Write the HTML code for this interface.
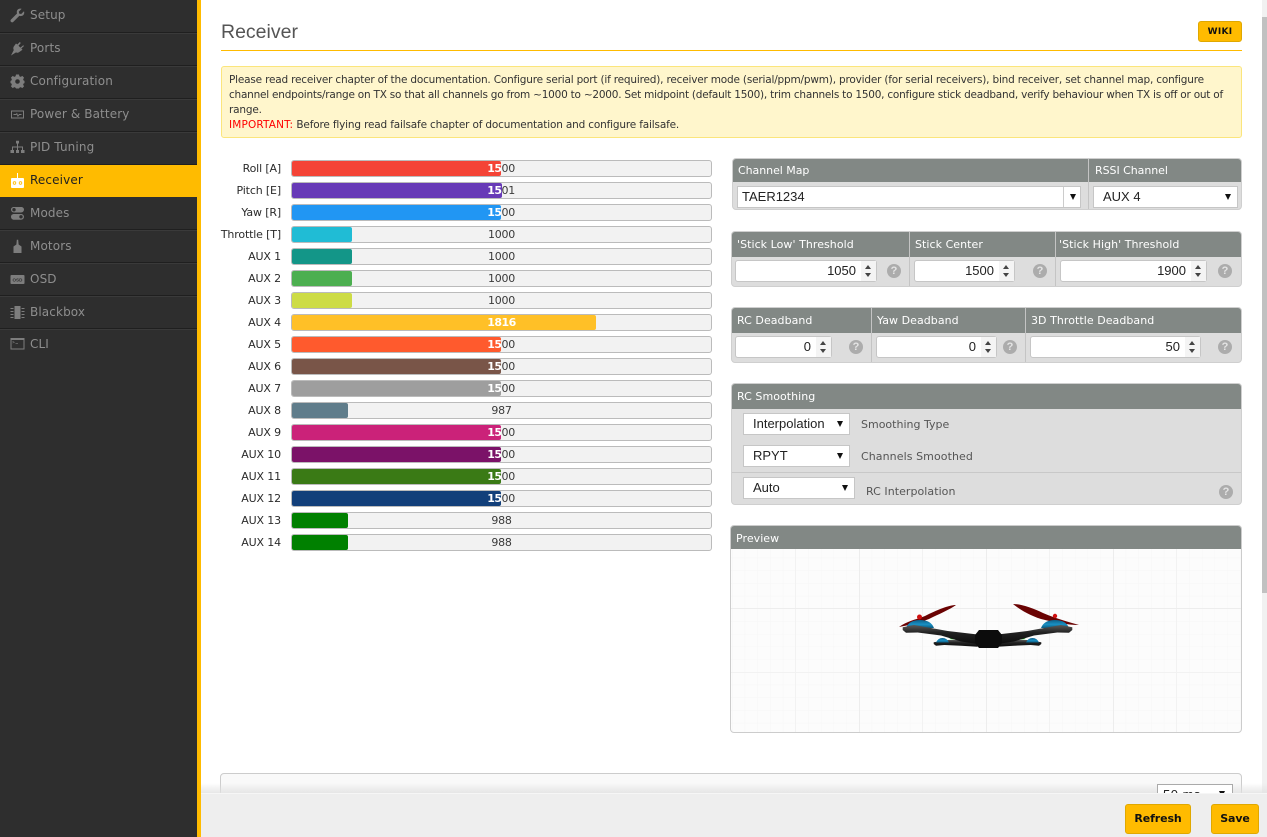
<!DOCTYPE html>
<html><head><meta charset="utf-8"><title>Receiver</title>
<style>
html,body{margin:0;padding:0;width:1267px;height:837px;overflow:hidden;background:#fff;font-family:"DejaVu Sans","Liberation Sans",sans-serif;color:#333}
*{box-sizing:border-box}
.a{position:absolute}
.t{position:absolute;white-space:nowrap}
#side{left:0;top:0;width:197px;height:837px;background:#2e2e2e}
#ybar{left:197px;top:0;width:4px;height:837px;background:#ffbb00}
.nav{position:absolute;left:0;width:197px;height:33px;border-bottom:1px solid #1f1f1f;box-shadow:0 1px 0 #3a3a3a;color:#8e8e8e;font-size:12px;letter-spacing:.12px;line-height:31px;padding-left:30px}
.nav svg{position:absolute;left:10px;top:8px;width:15px;height:15px;fill:#7d7d7d}
.nav.on{width:201px;background:#ffbb00;color:#222;border:0;box-shadow:none;height:32px}
.nav.on svg{fill:#fff}
.lab{position:absolute;left:205px;width:76px;text-align:right;font-size:11px;letter-spacing:-.15px;line-height:17px;color:#2b2b2b;white-space:nowrap}
.bar{position:absolute;left:291px;width:421px;height:17px;background:#f2f2f2;border:1px solid #bbb;border-radius:3px;font-size:11px;letter-spacing:-.25px;line-height:15px;text-align:center;color:#3a3a3a}
.fill{position:absolute;left:0;top:0;height:15px;overflow:hidden;border-radius:2px;color:#fff;font-weight:bold;letter-spacing:-.5px}
.fill span{position:absolute;left:0;top:0;width:419px;text-align:center}
.panel{position:absolute;background:#ddd;border:1px solid #cfcfcf;border-radius:4px;overflow:hidden}
.hd{position:absolute;left:0;top:0;right:0;background:#828885}
.hd span{position:absolute;top:0;color:#fff;font-size:11px;letter-spacing:.05px;white-space:nowrap}
.dv{position:absolute;top:0;bottom:0;width:1px;background:#c4c4c4}
.sel{position:absolute;background:#fff;border:1px solid #c6c6c6;font:13px/20px "Liberation Sans",sans-serif;color:#222;white-space:nowrap;overflow:hidden}
.sel i{position:absolute;width:0;height:0;border-left:3.5px solid transparent;border-right:3.5px solid transparent;border-top:6px solid #111;top:7px}
.inp{position:absolute;height:22px;background:#fff;border:1px solid #c6c6c6;border-radius:3px;font:13px/20px "Liberation Sans",sans-serif;color:#222;text-align:right;padding-right:20px}
.inp b{position:absolute;right:0;top:0;width:15px;height:20px;background:#f4f4f4}
.inp b:before{content:"";position:absolute;left:4px;top:4px;border-left:3.5px solid transparent;border-right:3.5px solid transparent;border-bottom:4.5px solid #444}
.inp b:after{content:"";position:absolute;left:4px;top:12px;border-left:3.5px solid transparent;border-right:3.5px solid transparent;border-top:4.5px solid #444}
.q{position:absolute;width:14px;height:14px;border-radius:50%;background:#acacac;color:#e4e4e4;font:bold 11px/14px "Liberation Sans",sans-serif;text-align:center}
.btn{position:absolute;background:#ffbb00;border:1px solid #e0a800;border-radius:3px;color:#111;font-size:11px;font-weight:bold;letter-spacing:-.1px;text-align:center;line-height:28px}
</style></head><body>

<div class="a" style="left:1262px;top:0;width:5px;height:837px;background:#f1f1f1"></div>
<div class="a" style="left:1262px;top:17px;width:5px;height:576px;background:#c1c1c1"></div>

<div id="side" class="a">
<div class="nav" style="top:0"><svg viewBox="0 0 15 15"><path d="M14 3.2 11.2 6 9.2 5.6 8.8 3.6 11.6 .9C9.6 .2 7.4 1 6.9 3 6.7 3.9 6.8 4.8 7 5.5L1 11.5C.2 12.3.4 13.3 1 13.9 1.7 14.5 2.600 14.600 3.300 13.900L9.300 7.900C10.100 8.200 11 8.200 11.900 7.900 13.800 7.300 14.700 5.200 14 3.200Z"/></svg>Setup</div>
<div class="nav" style="top:33px"><svg viewBox="0 0 15 15"><path d="M9.800 1 7.300 3.500 6 2.500 3.800 5.500C3 6.800 3.300 8.200 3.800 9L1 14.500 6 11.400C7 12 8.300 11.800 9.300 11L12.500 8.800 11.300 7.500 14 5 13.200 4.200 10.400 6.600 8.500 4.700 10.800 2Z"/></svg>Ports</div>
<div class="nav" style="top:66px"><svg viewBox="0 0 15 15"><path fill-rule="evenodd" d="M6 .5H9L9.400 2.300 10.700 2.900 12.300 1.900 14.100 3.700 13.100 5.300 13.700 6.600 14.500 6.900V9.100L13.700 9.400 13.100 10.700 14.100 12.300 12.300 14.100 10.700 13.100 9.400 13.700 9 14.500H6L5.600 13.700 4.300 13.100 2.700 14.100.9 12.300 1.900 10.700 1.300 9.400.5 9.100V6.900L1.300 6.600 1.900 5.300.9 3.700 2.700 1.900 4.300 2.900 5.600 2.300ZM7.500 5.200A2.300 2.300 0 1 0 7.500 9.800 2.300 2.300 0 1 0 7.500 5.200Z"/></svg>Configuration</div>
<div class="nav" style="top:99px"><svg viewBox="0 0 15 15"><path fill-rule="evenodd" d="M1 3.500H14V11.500H1ZM2 4.500V10.500H13V4.500Z"/><path d="M3.500 7H6L7 5.800 8 8.500 9 7H11.500V8H9.500L7.800 10 6.700 7.500 6.300 8H3.500Z"/></svg>Power &amp; Battery</div>
<div class="nav" style="top:132px"><svg viewBox="0 0 15 15"><path d="M6 .8H9V3.500H8V6.500H13V10H14.500V13H11V10H12V7.500H8V10H9V13H6V10H7V7.500H3V10H4V13H.5V10H2V6.500H7V3.500H6Z"/></svg>PID Tuning</div>
<div class="nav on" style="top:165px"><svg viewBox="0 0 15 15"><path fill-rule="evenodd" d="M7 0H8V5H13C13.600 5 14 5.400 14 6V14C14 14.600 13.600 15 13 15H2C1.400 15 1 14.600 1 14V6C1 5.400 1.400 5 2 5H7ZM4.500 8.300A1.700 1.700 0 1 0 4.500 11.700 1.700 1.700 0 1 0 4.500 8.300ZM10.500 8.300A1.700 1.700 0 1 0 10.500 11.700 1.700 1.700 0 1 0 10.500 8.300Z"/><circle cx="4.500" cy="10" r=".9"/><circle cx="10.500" cy="10" r=".9"/></svg>Receiver</div>
<div class="nav" style="top:197px;height:33px;line-height:32px"><svg viewBox="0 0 15 15" style="top:9px"><path fill-rule="evenodd" d="M4 1H11C12.700 1 14 2 14 3.500S12.700 6.500 11 6.500H4C2.300 6.500 1 5 1 3.500S2.300 1 4 1ZM4 2A1.700 1.700 0 1 0 4 5.400 1.700 1.700 0 1 0 4 2ZM4 8H11C12.700 8 14 9.300 14 10.800S12.700 13.800 11 13.800H4C2.300 13.800 1 12.500 1 10.800S2.300 8 4 8ZM11 9.100A1.700 1.700 0 1 0 11 12.500 1.700 1.700 0 1 0 11 9.100Z"/></svg>Modes</div>
<div class="nav" style="top:230px;line-height:32px"><svg viewBox="0 0 15 15" style="top:9px"><path d="M6.800 .8H8.200L8.600 5.500 11.500 7.500V14H3.500V7.500L6.400 5.500Z"/></svg>Motors</div>
<div class="nav" style="top:263px;line-height:32px"><svg viewBox="0 0 15 15" style="top:9px"><path d="M1.500 3H13.500C14.200 3 14.500 3.400 14.500 4V11C14.500 11.600 14.200 12 13.500 12H1.500C.8 12 .5 11.600 .5 11V4C.5 3.400 .8 3 1.500 3Z"/><text x="7.500" y="9.300" font-size="4.500" font-weight="bold" text-anchor="middle" fill="#2e2e2e" font-family="Liberation Sans">OSD</text></svg>OSD</div>
<div class="nav" style="top:296px;line-height:32px"><svg viewBox="0 0 15 15" style="top:9px"><path d="M4.500 1H10.500V14H4.500ZM.5 3H3.500V4H.5ZM.5 6H3.500V7H.5ZM.5 9H3.500V10H.5ZM.5 12H3.500V13H.5ZM11.500 3H14.500V4H11.500ZM11.500 6H14.500V7H11.500ZM11.500 9H14.500V10H11.500ZM11.500 12H14.500V13H11.500Z"/></svg>Blackbox</div>
<div class="nav" style="top:329px;height:32px;border:0;box-shadow:none;line-height:30px"><svg viewBox="0 0 15 15" style="top:7px"><path fill-rule="evenodd" d="M.5 2H14.500V13.500H.5ZM1.500 4V12.500H13.500V4Z"/><path d="M2.500 5 5 6.200 2.500 7.400V6.800L4 6.200 2.500 5.600ZM5.500 7H8V7.600H5.500Z"/></svg>CLI</div>
</div>
<div id="ybar" class="a"></div>

<div class="t" style="left:221px;top:20px;font:19.500px/24px 'Liberation Sans',sans-serif;color:#555">Receiver</div>
<div class="a" style="left:221px;top:50px;width:1021px;height:1px;background:#ffbb00"></div>
<div class="btn" style="left:1198px;top:21px;width:44px;height:21px;line-height:20px;font-size:9px;letter-spacing:.3px">WIKI</div>

<div class="a" style="left:221px;top:66px;width:1021px;height:72px;background:#fff6cc;border:1px solid #fbe57c;border-radius:3px"></div>
<div class="t" style="left:229px;top:73px;font-size:10.500px;line-height:15px;color:#333;letter-spacing:-.17px"><span style="letter-spacing:-.19px">Please read receiver chapter of the documentation. Configure serial port (if required), receiver mode (serial/ppm/pwm), provider (for serial receivers), bind receiver, set channel map, configure</span><br><span style="letter-spacing:-.23px">channel endpoints/range on TX so that all channels go from ~1000 to ~2000. Set midpoint (default 1500), trim channels to 1500, configure stick deadband, verify behaviour when TX is off or out of</span><br>range.<br><span style="color:#f00;letter-spacing:.15px">IMPORTANT:</span> Before flying read failsafe chapter of documentation and configure failsafe.</div>

<!-- channel rows -->
<div class="lab" style="top:160px">Roll [A]</div><div class="bar" style="top:160px">1500<div class="fill" style="width:209px;background:#f44336"><span>1500</span></div></div>
<div class="lab" style="top:182px">Pitch [E]</div><div class="bar" style="top:182px">1501<div class="fill" style="width:210px;background:#673ab7"><span>1501</span></div></div>
<div class="lab" style="top:204px">Yaw [R]</div><div class="bar" style="top:204px">1500<div class="fill" style="width:209px;background:#2196f3"><span>1500</span></div></div>
<div class="lab" style="top:226px">Throttle [T]</div><div class="bar" style="top:226px">1000<div class="fill" style="width:60px;background:#20bcd5"><span>1000</span></div></div>
<div class="lab" style="top:248px">AUX 1</div><div class="bar" style="top:248px">1000<div class="fill" style="width:60px;background:#139688"><span>1000</span></div></div>
<div class="lab" style="top:270px">AUX 2</div><div class="bar" style="top:270px">1000<div class="fill" style="width:60px;background:#4caf50"><span>1000</span></div></div>
<div class="lab" style="top:292px">AUX 3</div><div class="bar" style="top:292px">1000<div class="fill" style="width:60px;background:#cddc45"><span>1000</span></div></div>
<div class="lab" style="top:314px">AUX 4</div><div class="bar" style="top:314px">1816<div class="fill" style="width:304px;background:#ffc027"><span>1816</span></div></div>
<div class="lab" style="top:336px">AUX 5</div><div class="bar" style="top:336px">1500<div class="fill" style="width:209px;background:#ff5a2d"><span>1500</span></div></div>
<div class="lab" style="top:358px">AUX 6</div><div class="bar" style="top:358px">1500<div class="fill" style="width:209px;background:#795548"><span>1500</span></div></div>
<div class="lab" style="top:380px">AUX 7</div><div class="bar" style="top:380px">1500<div class="fill" style="width:209px;background:#9e9e9e"><span>1500</span></div></div>
<div class="lab" style="top:402px">AUX 8</div><div class="bar" style="top:402px">987<div class="fill" style="width:56px;background:#607d8b"><span>987</span></div></div>
<div class="lab" style="top:424px">AUX 9</div><div class="bar" style="top:424px">1500<div class="fill" style="width:209px;background:#cb2279"><span>1500</span></div></div>
<div class="lab" style="top:446px">AUX 10</div><div class="bar" style="top:446px">1500<div class="fill" style="width:209px;background:#7b1268"><span>1500</span></div></div>
<div class="lab" style="top:468px">AUX 11</div><div class="bar" style="top:468px">1500<div class="fill" style="width:209px;background:#3a7a15"><span>1500</span></div></div>
<div class="lab" style="top:490px">AUX 12</div><div class="bar" style="top:490px">1500<div class="fill" style="width:209px;background:#123f7a"><span>1500</span></div></div>
<div class="lab" style="top:512px">AUX 13</div><div class="bar" style="top:512px">988<div class="fill" style="width:56px;background:#008000"><span>988</span></div></div>
<div class="lab" style="top:534px">AUX 14</div><div class="bar" style="top:534px">988<div class="fill" style="width:56px;background:#008000"><span>988</span></div></div>

<!-- Channel map -->
<div class="panel" style="left:732px;top:158px;width:510px;height:52px">
 <div class="hd" style="height:23px;line-height:24px"><span style="left:5px;letter-spacing:-.05px">Channel Map</span><span style="left:362px;letter-spacing:-.05px">RSSI Channel</span></div>
 <div class="dv" style="left:355px"></div>
 <div class="sel" style="left:4px;top:27px;width:344px;height:22px;padding-left:4px">TAER1234<u style="position:absolute;right:16px;top:0;width:1px;height:20px;background:#ccc"></u><i style="right:4px"></i></div>
 <div class="sel" style="left:360px;top:27px;width:145px;height:22px;padding-left:9px">AUX 4<i style="right:6px"></i></div>
</div>

<!-- Thresholds -->
<div class="panel" style="left:731px;top:231px;width:511px;height:56px">
 <div class="hd" style="height:25px;line-height:25px"><span style="left:5px">'Stick Low' Threshold</span><span style="left:183px">Stick Center</span><span style="left:327px">'Stick High' Threshold</span></div>
 <div class="dv" style="left:177px"></div><div class="dv" style="left:323px"></div>
 <div class="inp" style="left:3px;top:28px;width:142px">1050<b></b></div><div class="q" style="left:155px;top:32px">?</div>
 <div class="inp" style="left:182px;top:28px;width:101px">1500<b></b></div><div class="q" style="left:301px;top:32px">?</div>
 <div class="inp" style="left:328px;top:28px;width:147px">1900<b></b></div><div class="q" style="left:486px;top:32px">?</div>
</div>

<!-- Deadband -->
<div class="panel" style="left:731px;top:307px;width:511px;height:56px">
 <div class="hd" style="height:25px;line-height:25px"><span style="left:5px">RC Deadband</span><span style="left:145px">Yaw Deadband</span><span style="left:299px">3D Throttle Deadband</span></div>
 <div class="dv" style="left:139px"></div><div class="dv" style="left:293px"></div>
 <div class="inp" style="left:3px;top:28px;width:97px">0<b></b></div><div class="q" style="left:117px;top:32px">?</div>
 <div class="inp" style="left:144px;top:28px;width:121px">0<b></b></div><div class="q" style="left:271px;top:32px">?</div>
 <div class="inp" style="left:298px;top:28px;width:171px">50<b></b></div><div class="q" style="left:486px;top:32px">?</div>
</div>

<!-- RC Smoothing -->
<div class="panel" style="left:731px;top:383px;width:511px;height:122px">
 <div class="hd" style="height:25px;line-height:25px"><span style="left:5px">RC Smoothing</span></div>
 <div class="sel" style="left:11px;top:29px;width:107px;height:22px;padding-left:9px">Interpolation<i style="right:6px;top:7px"></i></div>
 <div class="t" style="left:129px;top:33px;font-size:11px;line-height:15px;color:#555">Smoothing Type</div>
 <div class="sel" style="left:11px;top:61px;width:107px;height:22px;padding-left:9px">RPYT<i style="right:6px;top:7px"></i></div>
 <div class="t" style="left:129px;top:65px;font-size:11px;line-height:15px;color:#555;letter-spacing:.08px">Channels Smoothed</div>
 <div class="a" style="left:0;top:88px;width:511px;height:1px;background:#c8c8c8"></div>
 <div class="sel" style="left:11px;top:93px;width:112px;height:22px;padding-left:9px">Auto<i style="right:6px;top:7px"></i></div>
 <div class="t" style="left:134px;top:100px;font-size:11px;line-height:15px;color:#555;letter-spacing:.05px">RC Interpolation</div>
 <div class="q" style="left:487px;top:101px">?</div>
</div>

<!-- Preview -->
<div class="a" style="left:730px;top:525px;width:512px;height:208px;border:1px solid #ccc;border-radius:4px;overflow:hidden;background:#fcfcfc">
 <div class="hd" style="height:23px;line-height:25px"><span style="left:5px">Preview</span></div>
 <svg class="a" style="left:0;top:23px" width="510" height="183" viewBox="730 549 510 183">
  <defs>
   <pattern id="mi" x="731" y="545" width="12.700" height="12.700" patternUnits="userSpaceOnUse"><path d="M0 0V12.700M0 0H12.700" stroke="#f6f6f6" fill="none"/></pattern>
   <linearGradient id="arm" x1="0" y1="0" x2="0" y2="1"><stop offset="0" stop-color="#5a5a5a"/><stop offset=".4" stop-color="#222"/><stop offset="1" stop-color="#0c0c0c"/></linearGradient>
   <linearGradient id="dome" x1="0" y1="0" x2="0" y2="1"><stop offset="0" stop-color="#0e5f88"/><stop offset=".55" stop-color="#1a90c4"/><stop offset="1" stop-color="#0a5a80"/></linearGradient>
   <g id="half">
    <path d="M948 639 958 640 953 637.500Z" fill="#16a016"/>
    <path d="M932.700 642.300 946.700 640 960 640 976.700 641.700V646.700L960 645.700 943.300 645 935 645.700 932.700 644Z" fill="url(#arm)"/>
    <path d="M935 642.500Q937 638 941.500 638 946 638 948 642.500Z" fill="url(#dome)"/>
    <path d="M905 628Q908 620 919 620 930 620 933 628Z" fill="url(#dome)"/>
    <path d="M901.700 627.300 913 625 930 628 946.700 631 976.700 634.500V644L960 641.500 940 635.500 916.700 632.500 905 632.800 901.700 630Z" fill="url(#arm)"/>
   </g>
  </defs>
  <rect x="730" y="549" width="510" height="183" fill="url(#mi)"/>
  <path d="M794.500 549V732M921.500 549V732M1048.500 549V732M1175.500 549V732M730 672.500H1240" stroke="#f2f2f2" fill="none"/>
  <path d="M858.500 549V732M985.500 549V732M1112.500 549V732M730 608.500H1240" stroke="#ededed" fill="none"/>
  <!-- props -->
  <path d="M898 627C906 621 914 620 924 616 936 610 948 605 955 605 948 610 938 614 928 619 918 623 908 625 898 627Z" fill="#6a0303"/>
  <path d="M1012 604C1020 604 1032 608 1042 613 1056 619 1068 622 1078 625 1066 625 1052 622 1040 619 1028 615 1018 609 1012 604Z" fill="#6a0303"/>
  <circle cx="918.500" cy="617" r="2.500" fill="#d01010"/><circle cx="1054" cy="616" r="2.200" fill="#d01010"/>
  <use href="#half"/>
  <use href="#half" transform="translate(1973,0) scale(-1,1)"/>
  <!-- body -->
  <path d="M978 630H997L1001 635V643L997 648H978L974 643V635Z" fill="#0c0c0c"/>
 </svg>
</div>

<!-- Bottom panel -->
<div class="a" style="left:220px;top:773px;width:1022px;height:40px;background:#f9f9f9;border:1px solid #ccc;border-radius:4px"></div>
<div class="a" style="left:201px;top:783px;width:1066px;height:10px;background:linear-gradient(to bottom,rgba(225,225,225,0),rgba(225,225,225,.8))"></div>
<div class="sel" style="left:1157px;top:784px;width:76px;height:22px;padding-left:5px;border-color:#aaa;line-height:19px;letter-spacing:.5px">50 ms<i style="right:7px;top:6px"></i></div>

<!-- Footer -->
<div class="a" style="left:201px;top:793px;width:1066px;height:44px;background:#eee;border-top:1px solid #f6f6f6"></div>
<div class="btn" style="left:1125px;top:804px;width:66px;height:30px">Refresh</div>
<div class="btn" style="left:1211px;top:804px;width:48px;height:30px">Save</div>
</body></html>
